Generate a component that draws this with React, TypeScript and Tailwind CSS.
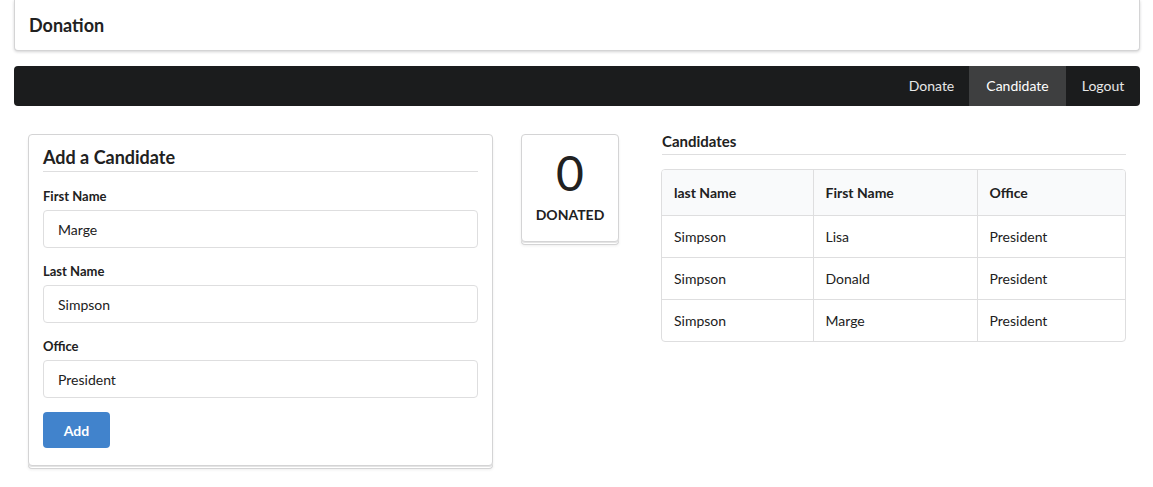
import React from "react";

const rows = [
  ["Simpson", "Lisa", "President"],
  ["Simpson", "Donald", "President"],
  ["Simpson", "Marge", "President"],
];

function Field({ label, value, mb }: { label: string; value: string; mb: string }) {
  return (
    <div className={mb}>
      <div className="text-[13px] font-bold leading-[15px] mb-[6px] text-[#212121]">{label}</div>
      <div className="h-[38px] border border-[#dededf] rounded-[4px] px-[14px] flex items-center text-[14px] text-[#212121]">
        {value}
      </div>
    </div>
  );
}

export default function App() {
  return (
    <div className="min-h-[487px] bg-white text-[#212121]" style={{ fontFamily: "Lato, 'Helvetica Neue', Arial, sans-serif" }}>
      <div className="ml-[14px] mr-[13px]">
        <div className="h-[51px] bg-white border-x border-b border-[#d4d4d5] rounded-b-[4px] shadow-[0_1px_3px_0_rgba(34,36,38,0.2)] flex items-center px-[14px]">
          <div className="text-[18px] font-bold leading-none pb-[1px]">Donation</div>
        </div>
        <div className="mt-[15px] h-[40px] bg-[#1b1c1d] rounded-[4px] flex justify-end text-[14px] text-white/90">
          <div className="w-[75px] flex items-center justify-center pb-[1px]">Donate</div>
          <div className="w-[97px] flex items-center justify-center pb-[1px] bg-[#3e3f40] text-white">Candidate</div>
          <div className="w-[74px] flex items-center justify-center pb-[1px] rounded-r-[4px]">Logout</div>
        </div>
      </div>

      <div className="flex items-start mt-[28px] ml-[28px]">
        <div className="w-[465px] border border-[#d4d4d5] rounded-[4px] bg-white shadow-[0_1px_0_0_#e4e4e4,0_3px_0_-1px_#ffffff,0_3px_0_0_#d4d4d5,0_4px_3px_0_rgba(34,36,38,0.08)] px-[14px] pt-[11px] pb-[17px]">
          <div className="text-[18px] font-bold leading-[23px] pb-[2px] border-b border-[#dededf] mb-[17px]">Add a Candidate</div>
          <Field label="First Name" value="Marge" mb="mb-[16px]" />
          <Field label="Last Name" value="Simpson" mb="mb-[16px]" />
          <Field label="Office" value="President" mb="mb-[14px]" />
          <div className="w-[67px] h-[36px] rounded-[4px] bg-[#4183cc] text-white text-[14px] font-bold flex items-center justify-center">
            Add
          </div>
        </div>

        <div className="ml-[28px] w-[98px] h-[108px] border border-[#d4d4d5] rounded-[4px] bg-white shadow-[0_1px_0_0_#e4e4e4,0_3px_0_-1px_#ffffff,0_3px_0_0_#d4d4d5,0_4px_3px_0_rgba(34,36,38,0.08)] flex flex-col items-center pt-[14px]">
          <div className="text-[48px] leading-[1] font-normal">0</div>
          <div className="text-[14px] font-bold uppercase mt-[9px] leading-[17px]">Donated</div>
        </div>

        <div className="ml-[42px] w-[465px]">
          <div className="ml-[1px] text-[15px] font-bold leading-[18px] pb-[4px] border-b border-[#dededf] mt-[-2px]">Candidates</div>
          <div className="mt-[14px] border border-[#dededf] rounded-[4px] overflow-hidden">
            <table className="w-full border-collapse text-[14px]">
              <thead>
                <tr className="bg-[#f9fafb] h-[45px] border-b border-[#dededf]">
                  <th className="w-[151px] text-left font-bold px-[12px] border-r border-[#dededf]">last Name</th>
                  <th className="w-[164px] text-left font-bold px-[12px] border-r border-[#dededf]">First Name</th>
                  <th className="text-left font-bold px-[12px]">Office</th>
                </tr>
              </thead>
              <tbody>
                {rows.map((r, i) => (
                  <tr key={i} className={`h-[42px] ${i < rows.length - 1 ? "border-b border-[#dededf]" : ""}`}>
                    <td className="px-[12px] border-r border-[#dededf]">{r[0]}</td>
                    <td className="px-[12px] border-r border-[#dededf]">{r[1]}</td>
                    <td className="px-[12px]">{r[2]}</td>
                  </tr>
                ))}
              </tbody>
            </table>
          </div>
        </div>
      </div>
    </div>
  );
}
